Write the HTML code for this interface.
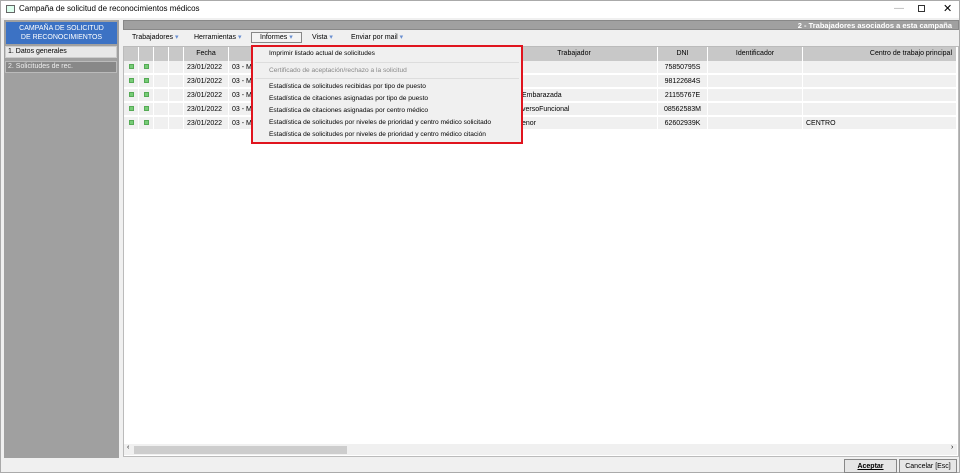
<!DOCTYPE html><html><head><meta charset="utf-8"><style>
*{box-sizing:border-box;margin:0;padding:0}
body{width:960px;height:473px;position:relative;background:#f0f0f0;font-family:"Liberation Sans",sans-serif;font-size:7px;color:#000;overflow:hidden;border:1px solid #aaa}
.a{position:absolute}
.tb{left:0;top:0;width:958px;height:17px;background:#fff}
.left{left:3px;top:19px;width:115px;height:438px;background:#a0a0a0}
.cell{position:absolute;height:14px;line-height:14px;border-right:1px solid #fff;white-space:nowrap;overflow:hidden}
.mi{position:absolute;left:16px;font-size:6.6px;white-space:nowrap}
</style></head><body>
<div class="a tb"></div>
<div class="a" style="left:5px;top:4px;width:9px;height:8px;border:1px solid #666;background:#dfe"></div>
<div class="a" style="left:18px;top:3px;font-size:8px">Campaña de solicitud de reconocimientos médicos</div>
<div class="a" style="left:893px;top:2px;font-size:10px;color:#aaa">—</div>
<div class="a" style="left:917px;top:4px;width:7px;height:7px;border:1px solid #333"></div>
<div class="a" style="left:942px;top:1px;font-size:11px">✕</div>
<div class="a left"></div>
<div class="a" style="left:5px;top:21px;width:111px;height:22px;background:#3c72c4;color:#fff;text-align:center;font-size:7px;line-height:9px;padding-top:2px">CAMPAÑA DE SOLICITUD<br>DE RECONOCIMIENTOS</div>
<div class="a" style="left:4px;top:45px;width:112px;height:12px;background:#e8e8e8;border:1px solid #ccc;line-height:10px;padding-left:2px">1. Datos generales</div>
<div class="a" style="left:4px;top:60px;width:112px;height:12px;background:#888;border:1px solid #bbb;color:#eee;line-height:10px;padding-left:2px">2. Solicitudes de rec.</div>
<div class="a" style="left:122px;top:19px;width:836px;height:10px;background:#a0a0a0;color:#fff;font-weight:bold;font-size:7.5px;line-height:9px;text-align:right;padding-right:6px;border:1px solid #888">2 - Trabajadores asociados a esta campaña</div>
<div class="a" style="left:131px;top:32px">Trabajadores <span style="color:#6a8fd0">▾</span></div>
<div class="a" style="left:193px;top:32px">Herramientas <span style="color:#6a8fd0">▾</span></div>
<div class="a" style="left:250px;top:31px;width:51px;height:11px;border:1px solid #888;background:#f4f4f4;padding-left:8px;line-height:9px">Informes <span style="color:#6a8fd0">▾</span></div>
<div class="a" style="left:311px;top:32px">Vista <span style="color:#6a8fd0">▾</span></div>
<div class="a" style="left:350px;top:32px">Enviar por mail <span style="color:#6a8fd0">▾</span></div>
<div class="a" style="left:122px;top:45px;width:836px;height:411px;background:#fff;border:1px solid #bbb"></div>
<div class="a" style="left:123px;top:46px;width:833px;height:14px;background:#c8c8c8"></div>
<div id="g"></div>
<div class="a" style="left:123px;top:443px;width:833px;height:11px;background:#f0f0f0"></div>
<div class="a" style="left:133px;top:445px;width:213px;height:8px;background:#cdcdcd"></div>
<div class="a" style="left:126px;top:443px;font-size:7px">‹</div><div class="a" style="left:950px;top:443px;font-size:7px">›</div>
<div class="a" style="left:843px;top:458px;width:53px;height:14px;border:1px solid #888;background:#e6e6e6;text-align:center;line-height:13px;font-weight:bold;text-decoration:underline">Aceptar</div>
<div class="a" style="left:898px;top:458px;width:58px;height:14px;border:1px solid #888;background:#e6e6e6;text-align:center;line-height:13px">Cancelar [Esc]</div>
<div class="a" style="left:250px;top:44px;width:272px;height:99px;border:2px solid #e0141e;background:#f0f0f0">
<div class="mi" style="top:3px">Imprimir listado actual de solicitudes</div>
<div class="a" style="left:2px;top:15px;width:264px;height:1px;background:#ddd"></div>
<div class="mi" style="top:20px;color:#888">Certificado de aceptación/rechazo a la solicitud</div>
<div class="a" style="left:2px;top:31px;width:264px;height:1px;background:#ddd"></div>
<div class="mi" style="top:36px">Estadística de solicitudes recibidas por tipo de puesto</div>
<div class="mi" style="top:48px">Estadística de citaciones asignadas por tipo de puesto</div>
<div class="mi" style="top:60px">Estadística de citaciones asignadas por centro médico</div>
<div class="mi" style="top:72px">Estadística de solicitudes por niveles de prioridad y centro médico solicitado</div>
<div class="mi" style="top:84px">Estadística de solicitudes por niveles de prioridad y centro médico citación</div>
</div>
<script>
var cols=[[123,15],[138,15],[153,15],[168,15],[183,45],[228,262],[490,167],[657,50],[707,95],[802,154]];
var hd=['','','','','Fecha','','Trabajador','DNI','Identificador','Centro de trabajo principal'];
var dni=['75850795S','98122684S','21155767E','08562583M','62602939K'];
var tr=['','','Embarazada','versoFuncional','enor'];
var h='';
cols.forEach(function(c,i){h+='<div class="cell" style="left:'+c[0]+'px;top:46px;width:'+c[1]+'px;text-align:'+(i==9?'right;padding-right:4px':'center')+'">'+hd[i]+'</div>';});
for(var r=0;r<5;r++){var y=60+r*14;
 h+='<div class="a" style="left:123px;top:'+y+'px;width:833px;height:13px;background:#f0f0f0;border-bottom:1px solid #fff"></div>';
 var v=['<span style="display:inline-block;width:5px;height:5px;background:#7c7;border:1px solid #5a5"></span>','<span style="display:inline-block;width:5px;height:5px;background:#7c7;border:1px solid #5a5"></span>','','','23/01/2022','03 - Mé','',dni[r],'',r==4?'CENTRO':''];
 cols.forEach(function(c,i){h+='<div class="cell" style="left:'+c[0]+'px;top:'+y+'px;width:'+c[1]+'px;text-align:'+((i<2||i==7)?'center':'left')+';padding-left:'+((i<2||i==7)?0:3)+'px">'+(i==6?'<span style="margin-left:28px">'+tr[r]+'</span>':v[i])+'</div>';});
}
document.getElementById('g').innerHTML=h;
</script>
</body></html>
